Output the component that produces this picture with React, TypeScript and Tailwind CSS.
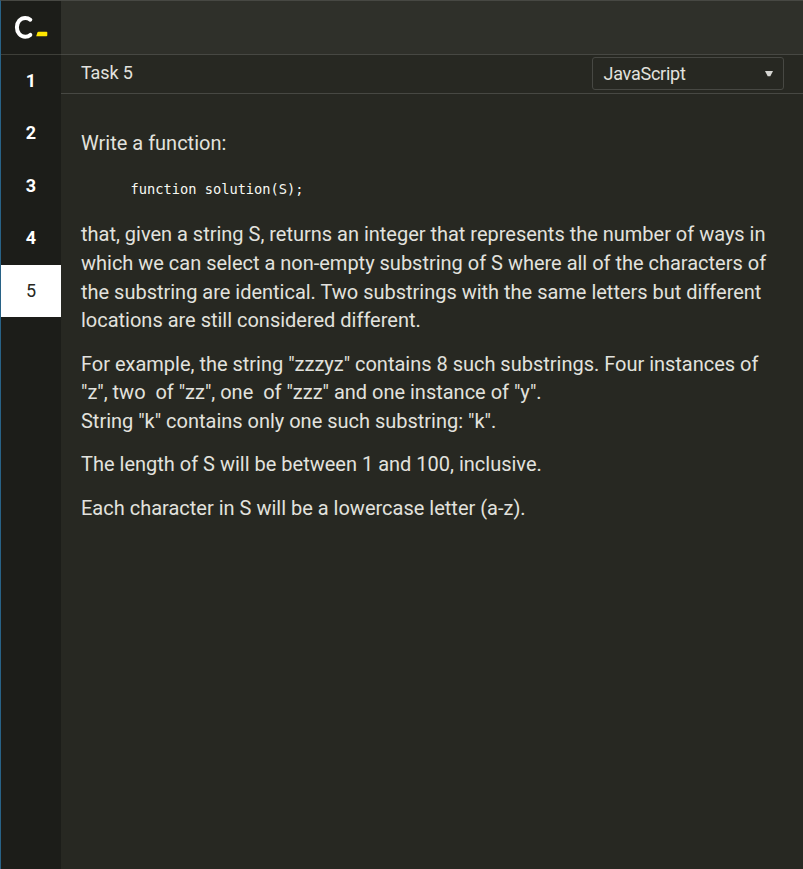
const tasks = [1, 2, 3, 4, 5];

export default function App() {
  return (
    <div className="flex h-[869px] w-[803px] flex-col overflow-hidden border-l border-t border-l-[#286286] border-t-[#474843] bg-[#272822] font-['Roboto',sans-serif] text-[#e2e2de]">
      <header className="flex h-[53px] shrink-0">
        <div className="w-[60px] bg-[#1c1d19]">
          <svg width="60" height="53" viewBox="1 1 60 53" fill="none">
            <path d="M30.3 19.7C28.9 18.5 27.1 17.9 25.2 17.9C20.4 17.9 16.9 21.9 16.9 27.2C16.9 32.7 20.4 36.7 25.2 36.7C27.1 36.7 28.9 36.1 30.3 34.9" stroke="#fff" strokeWidth="4" strokeLinecap="round" strokeLinejoin="round" />
            <path d="M38.6 31.7H46.5q.8 0 .8.8v2.8q0 1-1 1H36.2l1.2-3.7q.3-.9 1.2-.9z" fill="#ffe600" />
          </svg>
        </div>
        <div className="flex-1 bg-[#2f302a]" />
      </header>
      <div className="flex min-h-0 flex-1">
        <nav className="flex w-[60px] shrink-0 flex-col border-t border-[#3e3f39] bg-[#1c1d19] text-lg font-bold text-white">
          {tasks.map((task) => (
            <div key={task} className={task === 5 ? "flex h-[52px] items-center justify-center bg-white font-normal text-[#272822]" : "flex h-[52.5px] items-center justify-center pb-px"}>
              {task}
            </div>
          ))}
        </nav>
        <main className="min-w-0 flex-1 border-t border-[#474843]">
          <div className="flex h-[39px] items-start justify-between border-b border-[#474843] pl-5 pr-[19px] pt-[2px] text-[18px]">
            <h1 className="pt-[2px] leading-7 tracking-[-0.15px]">Task 5</h1>
            <div className="flex h-[33px] w-[192px] items-center justify-between rounded-[3px] border border-[#474843] pl-[10.5px] pr-[10px]">
              <span className="tracking-[-0.25px]">JavaScript</span>
              <svg width="8" height="6" viewBox="0 0 8 6"><path d="M0 0h8L5.3 5.3H2.7z" fill="#d6d6d2" /></svg>
            </div>
          </div>
          <article className="pl-5 pt-[35px] text-[20px] leading-[28.7px]">
            <p>Write a function:</p>
            <pre className="ml-[49.5px] mt-[17px] font-['DejaVu_Sans_Mono',monospace] text-[13.7px] leading-[28px] text-[#f8f8f2]">function solution(S);</pre>
            <p className="mt-[17.4px] whitespace-nowrap tracking-[-0.01px]">that, given a string S, returns an integer that represents the number of ways in<br />which we can select a non-empty substring of S where all of the characters of<br />the substring are identical. Two substrings with the same letters but different<br />locations are still considered different.</p>
            <p className="mt-[14.6px] whitespace-pre tracking-[-0.01px]">For example, the string "zzzyz" contains 8 such substrings. Four instances of<br />"z", two  of "zz", one  of "zzz" and one instance of "y".<br />String "k" contains only one such substring: "k".</p>
            <p className="mt-[14.4px]">The length of S will be between 1 and 100, inclusive.</p>
            <p className="mt-[15px]">Each character in S will be a lowercase letter (a-z).</p>
          </article>
        </main>
      </div>
    </div>
  );
}
